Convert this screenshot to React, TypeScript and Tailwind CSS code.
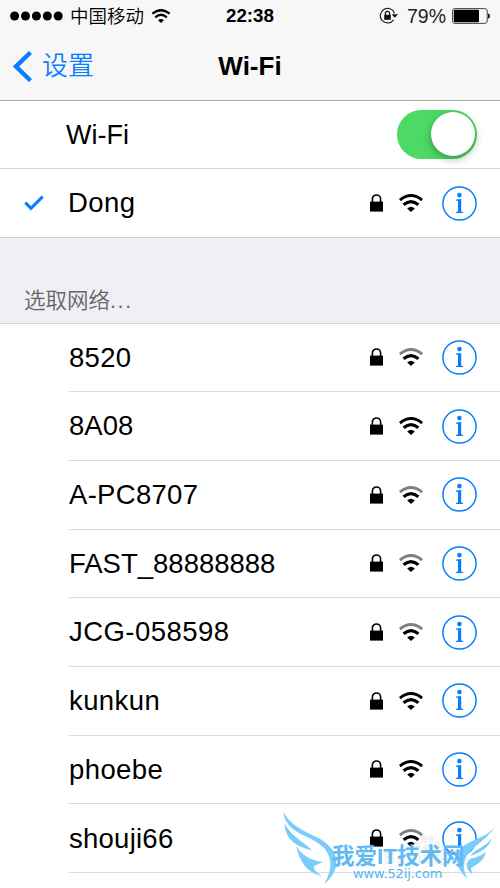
import clsx from "clsx";

interface Network {
  name: string;
  strong: boolean;
  tracking: string;
}

const networks: Network[] = [
  { name: "8520", strong: false, tracking: "tracking-[0.3px]" },
  { name: "8A08", strong: true, tracking: "tracking-normal" },
  { name: "A-PC8707", strong: false, tracking: "tracking-[0.3px]" },
  { name: "FAST_88888888", strong: false, tracking: "tracking-normal" },
  { name: "JCG-058598", strong: false, tracking: "tracking-[0.45px]" },
  { name: "kunkun", strong: true, tracking: "tracking-[0.4px]" },
  { name: "phoebe", strong: true, tracking: "tracking-[0.4px]" },
  { name: "shouji66", strong: false, tracking: "tracking-[0.25px]" },
];

function LockIcon() {
  return (
    <svg className="w-[13px] h-[18px]" viewBox="0 0 13 18">
      <path d="M2.4 9V5a4.1 4 0 0 1 8.2 0v4" fill="none" stroke="#000" strokeWidth="1.6" />
      <rect y="7.6" width="13" height="10" fill="#000" />
    </svg>
  );
}

function WifiIcon({ strong = true, className }: { strong?: boolean; className: string }) {
  return (
    <svg className={className} viewBox="0 0 24 18" fill="none">
      <path d="M.9 6.1Q12 -2.9 23.1 6.1" stroke={strong ? "#000" : "#7f7f7f"} strokeWidth="2.9" />
      <path d="M4.6 10.7Q12 4.4 19.4 10.7" stroke="#000" strokeWidth="3.1" />
      <path d="M8.2 14.5Q12 11 15.8 14.5L12 18Z" fill="#000" />
    </svg>
  );
}

function InfoIcon() {
  return (
    <svg className="w-[35px] h-[35px]" viewBox="0 0 35 35" fill="none">
      <circle cx="17.5" cy="17.5" r="16.6" stroke="#087eff" strokeWidth="1.5" />
      <circle cx="17.4" cy="9.1" r="2.3" fill="#087eff" />
      <path d="M14 13.4L19.2 13V25.4L21 26V27H14V26L16 25.4V15L14 14.5Z" fill="#087eff" />
    </svg>
  );
}

function NetworkIcons({ strong }: { strong: boolean }) {
  return (
    <div className="flex items-center">
      <LockIcon />
      <WifiIcon strong={strong} className="ml-4 w-6 h-[18px]" />
      <div className="ml-[19px]">
        <InfoIcon />
      </div>
    </div>
  );
}

function StatusBar() {
  return (
    <div className="flex h-8 items-center justify-between px-[10px]">
      <div className="flex w-[190px] items-center">
        <svg className="h-[10px] w-[53px]" viewBox="0 0 53 10">
          {[0, 1, 2, 3, 4].map((dot) => (
            <circle key={dot} cx={4.6 + dot * 10.9} cy="5" r="4.5" fill="#000" />
          ))}
        </svg>
        <span className="ml-[7px] pt-px text-[18.5px] font-[350]">中国移动</span>
        <WifiIcon className="ml-[7px] h-[14px] w-5" />
      </div>
      <span className="text-[18.8px] font-bold">22:38</span>
      <div className="flex w-[190px] items-center justify-end">
        <svg className="h-[18px] w-[19px]" viewBox="0 0 19 18" fill="none">
          <path d="M15.5 6.3A7.3 7.3 0 1 0 14.6 12.8" stroke="#222" strokeWidth="1.2" />
          <path d="M12.6 7.2H19L15.8 10.8Z" fill="#111" />
          <rect x="5.2" y="7.8" width="6.6" height="5" fill="#111" />
          <path d="M6.4 8V6.4a2.1 2 0 0 1 4.2 0V8" stroke="#111" strokeWidth="1.2" />
        </svg>
        <span className="ml-[9px] pt-px text-[19.5px] text-[#222]">79%</span>
        <svg className="ml-[6px] h-4 w-[38px]" viewBox="0 0 38 16" fill="none">
          <rect x=".6" y=".6" width="34.6" height="14.8" rx="2.4" stroke="#444" strokeWidth="1" />
          <rect x="1.8" y="1.8" width="25.2" height="12.4" rx="1" fill="#000" />
          <path d="M36 5.5Q38 5.5 38 8T36 10.5Z" fill="#111" />
        </svg>
      </div>
    </div>
  );
}

function Watermark() {
  return (
    <div className="absolute top-[808px] left-[280px] h-20 w-[220px]">
      {/* pale secondary mark */}
      <div className="absolute top-[37px] left-[103px] text-[18px] leading-[26px] font-bold whitespace-nowrap text-black/6">
        Baidu经验
      </div>
      <div className="absolute top-[57px] left-[100px] text-[12px] leading-4 whitespace-nowrap text-black/6">
        jingyan.baidu.com
      </div>
      <svg className="absolute inset-0 h-20 w-[220px]" viewBox="0 0 220 80" fill="#7accfb">
        <g fill="#000" fillOpacity=".05">
          <ellipse cx="144" cy="31" rx="3" ry="4" />
          <ellipse cx="151" cy="31" rx="3" ry="4" />
          <ellipse cx="138" cy="37" rx="3" ry="4" />
          <ellipse cx="157" cy="37" rx="3" ry="4" />
          <ellipse cx="148" cy="41" rx="6" ry="5" />
        </g>
        <path d="M3.5 4C9 15 20 21 32 27C46 33 54 41 56 50C58 61 51 71 44 76C50 66 53 56 48 46C44 37 35 33 25 28C12 22 4 15 3.5 4Z" />
        <path d="M4.5 15C9 26 22 33 32 42C16 39 5 31 4.5 15Z" />
        <path d="M16 38C23 48 30 52 43 54L34 58C33 61 36 64 42 68C27 65 20 54 16 38Z" />
        <path d="M215 18C209 30 196 36 188 46C182 54 183 64 188 71C179 64 175 54 178 46C183 31 207 32 215 18Z" />
        <path d="M212 30C209 40 200 45 190 48C196 40 206 39 212 30Z" />
        <path d="M206 44C203 55 195 57 191 60L192 66C186 62 185 55 190 51C196 49 201 48 206 44Z" />
      </svg>
      <div className="absolute top-[35px] left-[52px] text-[22.5px] leading-[28px] font-bold whitespace-nowrap text-[#61b9f2]">
        我爱IT技术网
      </div>
      <div className="absolute top-[58px] left-[73px] font-['DejaVu_Sans',sans-serif] text-[13px] leading-4 tracking-[-0.1px] whitespace-nowrap text-[#55b4f2]">
        www.52ij.com
      </div>
    </div>
  );
}

export default function App() {
  return (
    <div className="relative h-[888px] w-[500px] overflow-hidden bg-white font-['Liberation_Sans','Noto_Sans_CJK_SC',sans-serif] text-black">
      <header className="h-[101px] border-b border-[#aeaeb0] bg-[#f7f7f7]">
        <StatusBar />
        <div className="grid h-[68px] grid-cols-3 items-center">
          <div className="flex items-center pl-[13px] text-[#087eff]">
            <svg className="h-[31px] w-[19px]" viewBox="0 0 19 31" fill="none">
              <path d="M17.5 1.5L3 15.5L17.5 29.5" stroke="currentColor" strokeWidth="4.4" />
            </svg>
            <span className="ml-[10px] pt-px text-[26px] font-[350]">设置</span>
          </div>
          <h1 className="text-center text-[26px] font-bold">Wi-Fi</h1>
        </div>
      </header>
      <div className="flex h-[68px] items-center justify-between border-b border-[#d5d5d7] pr-[23px] pl-[66px]">
        <span className="pt-px text-[27px]">Wi-Fi</span>
        <div className="mb-px flex h-[49px] w-20 items-center justify-end rounded-full bg-[#4cd964] pr-[2px]">
          <div className="h-11 w-11 rounded-full bg-white shadow-[0_3px_8px_rgba(0,0,0,0.3)]" />
        </div>
      </div>
      <div className="flex h-[69px] items-center border-b border-[#d0d0d4] pr-[23px]">
        <svg className="ml-6 h-[17px] w-5" viewBox="0 0 20 17" fill="none">
          <path d="M1.3 7.7L7 13.3L18.7 1.6" stroke="#087eff" strokeWidth="3.2" />
        </svg>
        <span className="ml-6 grow text-[27.5px] tracking-[0.4px]">Dong</span>
        <NetworkIcons strong />
      </div>
      <div className="flex h-[85.5px] items-end border-b border-[#d5d5d8] bg-[#efeff4] pb-[5px] pl-6 text-[21.5px] font-[350] text-[#666]">
        选取网络<span className="tracking-[1.6px]">...</span>
      </div>
      {networks.map((network) => (
        <div key={network.name} className="pl-[69px]">
          <div className="flex h-[68.7px] items-center justify-between border-b border-[#dcdcde] pr-[23px]">
            <span className={clsx("text-[27.5px]", network.tracking)}>{network.name}</span>
            <NetworkIcons strong={network.strong} />
          </div>
        </div>
      ))}
      <Watermark />
    </div>
  );
}
